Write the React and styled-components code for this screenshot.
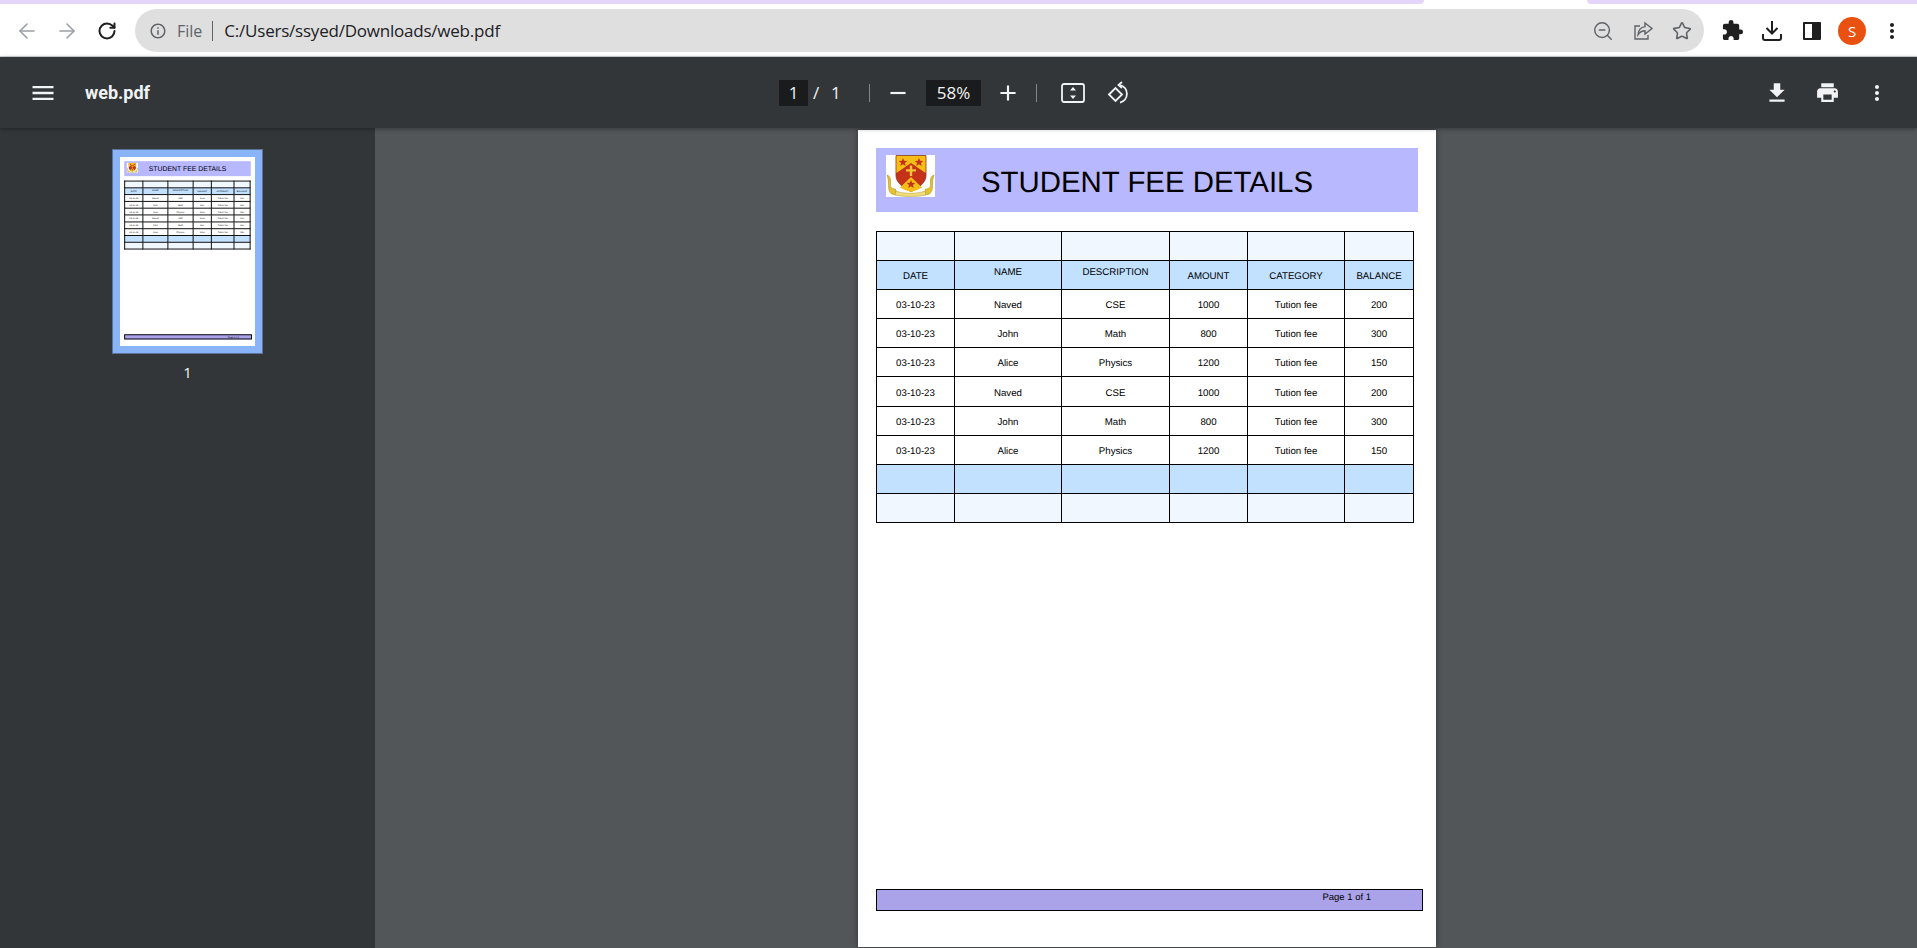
import styled, { createGlobalStyle } from 'styled-components';
import { MdInfoOutline, MdMenu, MdFileDownload, MdPrint, MdMoreVert, MdAdd, MdRemove, MdExtension } from 'react-icons/md';
import { ZoomOut, Star, ArrowLeft, ArrowRight, RotateCw } from 'lucide-react';

const columns = [78, 107, 108, 78, 97, 69];
const headings = [
    { label: 'DATE' },
    { label: 'NAME', raised: true },
    { label: 'DESCRIPTION', raised: true },
    { label: 'AMOUNT' },
    { label: 'CATEGORY' },
    { label: 'BALANCE' },
];
const fees = [
    ['03-10-23', 'Naved', 'CSE', '1000', 'Tution fee', '200'],
    ['03-10-23', 'John', 'Math', '800', 'Tution fee', '300'],
    ['03-10-23', 'Alice', 'Physics', '1200', 'Tution fee', '150'],
    ['03-10-23', 'Naved', 'CSE', '1000', 'Tution fee', '200'],
    ['03-10-23', 'John', 'Math', '800', 'Tution fee', '300'],
    ['03-10-23', 'Alice', 'Physics', '1200', 'Tution fee', '150'],
];

function Crest() {
    return (
        <CrestBox viewBox="0 0 49 42">
            <rect width="49" height="42" fill="#fff" />
            {/* side ribbons */}
            <path d="M1 20c3 1 4 4 3.500 8-.4 4 1 6 5 6l1 6-5-1c-3-3-3-6-3-10 0-3-.5-6-1.500-9z" fill="#e6c32a" stroke="#9c8420" strokeWidth=".5" />
            <path d="M48 20c-3 1-4 4-3.500 8 .4 4-1 6-5 6l-1 6 5-1c3-3 3-6 3-10 0-3 .5-6 1.500-9z" fill="#e6c32a" stroke="#9c8420" strokeWidth=".5" />
            <path d="M10 36c8 3 21 3 29 0l1 4c-8 2-23 2-31 0z" fill="#efdc7a" stroke="#a08a20" strokeWidth=".4" />
            {/* shield */}
            <path d="M10 .6h30v20c0 7-7 12-15 16-8-4-15-9-15-16z" fill="#c4321a" stroke="#7a3a20" strokeWidth=".8" />
            <path d="M10.400 1h29.200v17L25 8 10.400 18z" fill="#f6bd16" />
            <path d="M25 22l11 10.500c-3 1.800-7 3.400-11 4.500-4-1.100-8-2.700-11-4.500z" fill="#f6bd16" />
            <path d="M17 3l1.200 2.800 3 .2-2.300 1.900.8 3-2.700-1.700-2.700 1.700.8-3L12.800 6l3-.2z" fill="#c4321a" />
            <path d="M33 3l1.200 2.800 3 .2-2.300 1.900.8 3-2.700-1.700-2.700 1.700.8-3L28.800 6l3-.2z" fill="#c4321a" />
            <path d="M25 25l1.200 2.800 3 .2-2.300 1.900.8 3-2.700-1.700-2.700 1.700.8-3L20.800 28l3-.2z" fill="#c4321a" />
            {/* cross */}
            <path d="M23.800 10.500h2.400v3.700H30v2.400h-3.800v4.400h-2.400v-4.400H20v-2.400h3.800z" fill="#f3c534" />
        </CrestBox>
    );
}

function SheetContent({ $thumb }) {
    return (
        <SheetBody>
            <TitleBand>
                <Crest />
                <Title>STUDENT FEE DETAILS</Title>
            </TitleBand>
            <FeeTable>
                <colgroup>
                    {columns.map((w, i) => <col key={i} width={w} />)}
                </colgroup>
                <tbody>
                    <tr>
                        {columns.map((w, i) => <FeeCell key={i} $thumb={$thumb} $fill="#f0f7ff" />)}
                    </tr>
                    <tr>
                        {headings.map((h) => (
                            <FeeCell key={h.label} $thumb={$thumb} $fill="#c2e0ff" $raised={h.raised}>{h.label}</FeeCell>
                        ))}
                    </tr>
                    {fees.map((row, r) => (
                        <tr key={r}>
                            {row.map((v, i) => <FeeCell key={i} $thumb={$thumb}>{v}</FeeCell>)}
                        </tr>
                    ))}
                    <tr>
                        {columns.map((w, i) => <FeeCell key={i} $thumb={$thumb} $fill="#c2e0ff" />)}
                    </tr>
                    <tr>
                        {columns.map((w, i) => <FeeCell key={i} $thumb={$thumb} $fill="#f0f7ff" />)}
                    </tr>
                </tbody>
            </FeeTable>
            <FooterBand $thumb={$thumb}>Page 1 of 1</FooterBand>
        </SheetBody>
    );
}

export default function App() {
    return (
        <Screen>
            <GlobalStyle />
            <TabStrip>
                <StripLeft />
                <StripRight />
            </TabStrip>
            <BrowserBar>
                <NavButton $color="#9aa0a6"><ArrowLeft size={24} strokeWidth={1.6} /></NavButton>
                <NavButton $color="#9aa0a6"><ArrowRight size={24} strokeWidth={1.6} /></NavButton>
                <NavButton $color="#1f1f1f"><RotateCw size={20} strokeWidth={2.4} /></NavButton>
                <Omnibox>
                    <MdInfoOutline size={18} color="#5f6368" />
                    <FileLabel>File</FileLabel>
                    <UrlDivider />
                    <UrlText>C:/Users/ssyed/Downloads/web.pdf</UrlText>
                    <OmniActions>
                        <ZoomOut size={22} strokeWidth={1.6} color="#5f6368" />
                        <svg width="22" height="22" viewBox="0 0 22 22" fill="none" stroke="#5f6368" strokeWidth="1.4">
                            <path d="M8 6H3v13h13v-4" />
                            <path d="M13 3l7 5.5-7 5.5v-3.2c-3 0-5 1-7 4 .3-4.500 3-7.600 7-8.200z" />
                        </svg>
                        <Star size={20} strokeWidth={1.9} color="#5f6368" />
                    </OmniActions>
                </Omnibox>
                <BrowserActions>
                    <ActionSlot><MdExtension size={23} color="#1f1f1f" /></ActionSlot>
                    <ActionSlot>
                        <svg width="22" height="22" viewBox="0 0 22 22" fill="none" stroke="#1f1f1f" strokeWidth="2">
                            <path d="M11 1v12M5.500 8l5.500 5.500L16.500 8" />
                            <path d="M2 14v4a2 2 0 0 0 2 2h14a2 2 0 0 0 2-2v-4" />
                        </svg>
                    </ActionSlot>
                    <ActionSlot><SidePanelIcon /></ActionSlot>
                    <ActionSlot><Avatar>S</Avatar></ActionSlot>
                    <ActionSlot><MdMoreVert size={24} color="#1f1f1f" /></ActionSlot>
                </BrowserActions>
            </BrowserBar>
            <ViewerToolbar>
                <ToolbarLeft>
                    <MdMenu size={28} color="#f1f3f4" />
                    <DocName>web.pdf</DocName>
                </ToolbarLeft>
                <ToolbarCenter>
                    <PageInput>1</PageInput>
                    <PageCount>/</PageCount>
                    <PageCount>1</PageCount>
                    <ToolDivider $before="25px" $after="15px" />
                    <MdRemove size={26} color="#f1f3f4" />
                    <ZoomInput>58%</ZoomInput>
                    <MdAdd size={26} color="#f1f3f4" />
                    <ToolDivider $before="15px" $after="24px" />
                    <ToolIcon viewBox="0 0 24 20" width="24" height="20">
                        <rect x="1" y="1" width="22" height="18" rx="2" fill="none" stroke="#f1f3f4" strokeWidth="1.800" />
                        <path d="M12 4l3 3.500H9zM12 16l-3-3.500h6z" fill="#f1f3f4" />
                    </ToolIcon>
                    <ToolIcon viewBox="0 0 24 24" width="24" height="24" fill="none" stroke="#f1f3f4" strokeWidth="1.800">
                        <path d="M2 13.500l6.500-6.500 6.500 6.500-6.500 6.500z" />
                        <path d="M13 5.500a9 9 0 0 1 0 17.500" transform="translate(0 -1.500)" />
                        <path d="M15 1l-3.500 3 3.500 3" />
                    </ToolIcon>
                </ToolbarCenter>
                <ToolbarRight>
                    <MdFileDownload size={26} color="#f1f3f4" />
                    <MdPrint size={25} color="#f1f3f4" />
                    <MdMoreVert size={24} color="#f1f3f4" />
                </ToolbarRight>
            </ViewerToolbar>
            <ViewerBody>
                <Sidebar>
                    <ThumbFrame>
                        <ThumbScale>
                            <SheetContent $thumb />
                        </ThumbScale>
                    </ThumbFrame>
                    <ThumbNumber>1</ThumbNumber>
                </Sidebar>
                <Canvas>
                    <Sheet>
                        <SheetContent />
                    </Sheet>
                </Canvas>
            </ViewerBody>
        </Screen>
    );
}

const GlobalStyle = createGlobalStyle`
  html, body {
    margin: 0;
    padding: 0;
    overflow: hidden;
    background: #525659;
  }
`;

const Screen = styled.div`
  width: 1917px;
  height: 948px;
  display: flex;
  flex-direction: column;
  overflow: hidden;
  font-family: "Open Sans", "Liberation Sans", sans-serif;
`;

const TabStrip = styled.div`
  height: 4px;
  display: flex;
  justify-content: space-between;
  background: #fff;
  flex: none;
`;

const StripLeft = styled.div`
  width: 1424px;
  background: #e6d5fb;
  border-bottom-right-radius: 8px;
`;

const StripRight = styled.div`
  width: 330px;
  background: #e6d5fb;
  border-bottom-left-radius: 8px;
`;

const BrowserBar = styled.div`
  height: 53px;
  box-sizing: border-box;
  padding: 5px 0 4px 7px;
  display: flex;
  align-items: center;
  background: #fff;
  border-bottom: 1px solid #d5d5d5;
  flex: none;
`;

const NavButton = styled.div`
  width: 40px;
  height: 40px;
  display: flex;
  align-items: center;
  justify-content: center;
  color: ${(p) => p.$color};
`;

const Omnibox = styled.div`
  margin-left: 8px;
  width: 1569px;
  height: 43px;
  box-sizing: border-box;
  padding: 0 12px 0 14px;
  display: flex;
  align-items: center;
  border-radius: 22px;
  background: #dfdfdf;
`;

const FileLabel = styled.span`
  margin-left: 10px;
  font-size: 16px;
  color: #5f6368;
`;

const UrlDivider = styled.span`
  width: 1px;
  height: 20px;
  margin: 0 11px 0 10px;
  background: #5f6368;
`;

const UrlText = styled.span`
  font-size: 17px;
  color: #202124;
  letter-spacing: -0.22px;
`;

const OmniActions = styled.div`
  margin-left: auto;
  display: flex;
  align-items: center;
  gap: 18px;
`;

const BrowserActions = styled.div`
  margin-left: 8px;
  display: flex;
  align-items: center;
`;

const ActionSlot = styled.div`
  width: 40px;
  display: flex;
  align-items: center;
  justify-content: center;
`;

const SidePanelIcon = styled.span`
  width: 18px;
  height: 18px;
  box-sizing: border-box;
  border: 2px solid #1f1f1f;
  border-right-width: 9px;
  border-radius: 1px;
`;

const Avatar = styled.span`
  width: 28px;
  height: 28px;
  border-radius: 50%;
  display: flex;
  align-items: center;
  justify-content: center;
  background: #e8510f;
  color: #fff;
  font-size: 15px;
`;

const ViewerToolbar = styled.div`
  position: relative;
  z-index: 2;
  height: 71px;
  display: grid;
  grid-template-columns: 779px auto 1fr;
  align-items: center;
  background: #323639;
  box-shadow: 0 1px 4px rgba(0, 0, 0, 0.35);
  color: #f1f3f4;
  flex: none;
`;

const ToolbarLeft = styled.div`
  display: flex;
  align-items: center;
  padding-left: 29px;
  gap: 28px;
`;

const DocName = styled.span`
  font-family: Roboto, "Liberation Sans", sans-serif;
  font-size: 18px;
  font-weight: 700;
`;

const ToolbarCenter = styled.div`
  display: flex;
  align-items: center;
`;

const PageInput = styled.span`
  width: 29px;
  height: 26px;
  display: flex;
  align-items: center;
  justify-content: center;
  background: #191b1c;
  font-size: 17px;
`;

const PageCount = styled.span`
  margin-left: 5px;
  min-width: 13px;
  font-size: 17px;
`;

const ToolDivider = styled.span`
  width: 1px;
  height: 18px;
  margin: 0 ${(p) => p.$after} 0 ${(p) => p.$before};
  background: #80868b;
`;

const ZoomInput = styled.span`
  width: 55px;
  height: 26px;
  margin: 0 14px 0 15px;
  display: flex;
  align-items: center;
  justify-content: center;
  background: #191b1c;
  font-size: 17px;
`;

const ToolIcon = styled.svg`
  margin-right: 22px;
`;

const ToolbarRight = styled.div`
  display: flex;
  align-items: center;
  justify-content: flex-end;
  padding-right: 28px;
  gap: 25px;
`;

const ViewerBody = styled.div`
  flex: 1;
  min-height: 0;
  display: flex;
`;

const Sidebar = styled.aside`
  width: 375px;
  flex: none;
  padding-top: 21px;
  display: flex;
  flex-direction: column;
  align-items: center;
  background: #323639;
`;

const ThumbFrame = styled.div`
  width: 135px;
  height: 189px;
  border: 8px solid #8ab4f8;
  outline: 1px solid #5d7399;
  outline-offset: -1px;
  background: #fff;
  overflow: hidden;
`;

const ThumbScale = styled.div`
  width: 578px;
  height: 817px;
  transform: scale(0.2336);
  transform-origin: 0 0;
`;

const ThumbNumber = styled.div`
  margin-top: 8px;
  color: #f1f3f4;
  font-size: 15px;
`;

const Canvas = styled.main`
  flex: 1;
  min-width: 0;
  padding: 2px 0 0 2px;
  display: flex;
  justify-content: center;
  align-items: flex-start;
  background: #525659;
`;

const Sheet = styled.div`
  width: 578px;
  height: 817px;
  background: #fff;
  box-shadow: 0 0 6px rgba(0, 0, 0, 0.4);
`;

const SheetBody = styled.div`
  height: 817px;
  box-sizing: border-box;
  padding: 18px 0 36px 18px;
  display: flex;
  flex-direction: column;
  align-items: flex-start;
  font-family: "Liberation Sans", Arial, sans-serif;
  color: #000;
  text-rendering: geometricPrecision;
`;

const TitleBand = styled.div`
  width: 542px;
  height: 64px;
  flex: none;
  display: flex;
  align-items: center;
  padding-left: 10px;
  box-sizing: border-box;
  background: #b8b8ff;
`;

const CrestBox = styled.svg`
  width: 49px;
  height: 42px;
  flex: none;
  margin-top: -8px;
`;

const Title = styled.h1`
  margin: 5px 0 0 46px;
  font-size: 29.4px;
  font-weight: 400;
  white-space: nowrap;
`;

const FeeTable = styled.table`
  margin-top: 19px;
  width: 537px;
  table-layout: fixed;
  border-collapse: collapse;
  flex: none;
`;

const FeeCell = styled.td`
  height: 29.1px;
  padding: ${(p) => (p.$raised ? '0 0 6px' : '3px 0 0')};
  box-sizing: border-box;
  border: ${(p) => (p.$thumb ? '4px' : '1px')} solid #000;
  background: ${(p) => p.$fill || '#fff'};
  font-size: 9.7px;
  text-align: center;
  white-space: nowrap;
`;

const FooterBand = styled.div`
  margin-top: auto;
  width: 547px;
  height: 22px;
  flex: none;
  box-sizing: border-box;
  border: ${(p) => (p.$thumb ? '4px' : '1px')} solid #000;
  padding-right: 51px;
  background: #aba3e9;
  font-size: 9.5px;
  line-height: 15px;
  text-align: right;
`;
